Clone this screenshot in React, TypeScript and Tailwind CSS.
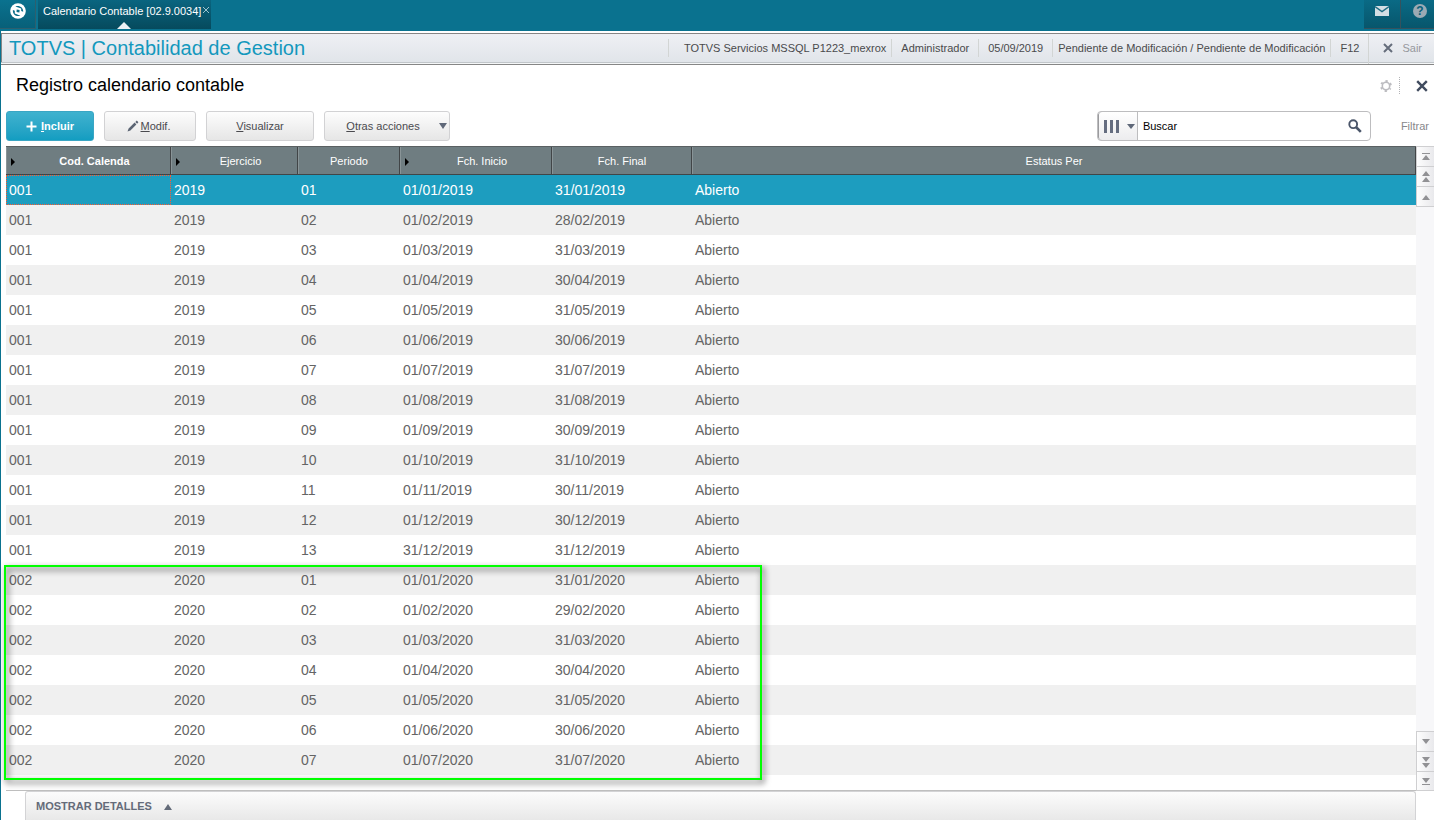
import type { ReactNode } from "react";

type Row = [string, string, string, string, string];

const rows: Row[] = [
  ["001", "2019", "01", "01/01/2019", "31/01/2019"],
  ["001", "2019", "02", "01/02/2019", "28/02/2019"],
  ["001", "2019", "03", "01/03/2019", "31/03/2019"],
  ["001", "2019", "04", "01/04/2019", "30/04/2019"],
  ["001", "2019", "05", "01/05/2019", "31/05/2019"],
  ["001", "2019", "06", "01/06/2019", "30/06/2019"],
  ["001", "2019", "07", "01/07/2019", "31/07/2019"],
  ["001", "2019", "08", "01/08/2019", "31/08/2019"],
  ["001", "2019", "09", "01/09/2019", "30/09/2019"],
  ["001", "2019", "10", "01/10/2019", "31/10/2019"],
  ["001", "2019", "11", "01/11/2019", "30/11/2019"],
  ["001", "2019", "12", "01/12/2019", "30/12/2019"],
  ["001", "2019", "13", "31/12/2019", "31/12/2019"],
  ["002", "2020", "01", "01/01/2020", "31/01/2020"],
  ["002", "2020", "02", "01/02/2020", "29/02/2020"],
  ["002", "2020", "03", "01/03/2020", "31/03/2020"],
  ["002", "2020", "04", "01/04/2020", "30/04/2020"],
  ["002", "2020", "05", "01/05/2020", "31/05/2020"],
  ["002", "2020", "06", "01/06/2020", "30/06/2020"],
  ["002", "2020", "07", "01/07/2020", "31/07/2020"],
];

const columns = [
  { label: "Cod. Calenda", width: "w-[165px]", sortable: true, bold: true },
  { label: "Ejercicio", width: "w-[127px]", sortable: true },
  { label: "Periodo", width: "w-[102px]" },
  { label: "Fch. Inicio", width: "w-[152px]", sortable: true },
  { label: "Fch. Final", width: "w-[140px]" },
  { label: "Estatus Per", width: "" },
];

function Cross({ className }: { className: string }) {
  return (
    <svg viewBox="0 0 12 12" className={className} aria-hidden="true">
      <path d="M1.2 1.2 10.8 10.8M10.8 1.2 1.2 10.8" stroke="currentColor" strokeWidth="2.4" fill="none" />
    </svg>
  );
}

function TopBar() {
  return (
    <div className="flex h-[31px] bg-[#0a728f]">
      <button aria-label="Inicio" className="flex h-[29px] w-9 items-start justify-center border-r border-b border-[#2d5f6e] bg-linear-to-b from-[#0a728f] to-[#086079] pt-[3px]">
        <svg viewBox="0 0 16 16" className="h-4 w-4" aria-hidden="true">
          <circle cx="8" cy="8" r="7.8" fill="#fff" />
          <path
            d="M5.4 3.4C9.4 2 13.4 4.4 13.2 8.8L11.2 7.9V5.6ZM2.9 6.9 4.8 7.8V10.4L10.4 12.7C6.4 14 2.4 11.4 2.9 6.9ZM6.7 6.5 9.6 7.1 9.4 9.5 6.5 8.9Z"
            fill="#0a6c88"
          />
        </svg>
      </button>
      <div className="relative ml-[2px] flex h-[29px] w-[173px] items-start gap-px bg-linear-to-b from-[#0a6580] to-[#064a5d] pt-1 pl-[5px] text-white">
        <span className="text-[11px] leading-[14px] whitespace-nowrap">Calendario Contable [02.9.0034]</span>
        <button aria-label="Cerrar pestaña" className="mt-[2px]">
          <svg viewBox="0 0 8 8" className="h-2 w-2" aria-hidden="true">
            <path d="M1 1 7 7M7 1 1 7" stroke="#9fc3ce" strokeWidth="1" />
          </svg>
        </button>
        <svg viewBox="0 0 14 7" className="absolute bottom-0 left-[79px] h-[7px] w-[14px]" aria-hidden="true">
          <path d="M7 0 14 7H0Z" fill="#eef1f4" />
        </svg>
      </div>
      <div className="ml-auto flex">
        <button aria-label="Mensajes" className="flex h-[29px] w-[37px] items-start justify-center border-r border-b border-[#35525d] bg-linear-to-b from-[#0a6a85] to-[#07566c] pt-[6px]">
          <svg viewBox="0 0 14 10" className="h-[10px] w-[14px]" aria-hidden="true">
            <rect width="14" height="10" fill="#d3dee4" />
            <path d="M0 .6 7 5.6 14 .6" fill="none" stroke="#1f6c83" strokeWidth="1.3" />
          </svg>
        </button>
        <button aria-label="Ayuda" className="flex h-[29px] w-[33px] items-start justify-center border-b border-[#35525d] bg-linear-to-b from-[#0a6a85] to-[#07566c] pt-1 pl-[5px]">
          <span className="flex h-[14px] w-[14px] items-center justify-center rounded-full bg-[#9baab4] text-[12px] leading-[14px] font-bold text-[#08607a]">?</span>
        </button>
      </div>
    </div>
  );
}

function InfoItem({ padding = "px-[9px]", children }: { padding?: string; children: ReactNode }) {
  return <li className={`${padding} flex h-[18px] items-center border-l border-[#d2d5d4] whitespace-nowrap`}>{children}</li>;
}

function AppHeader() {
  return (
    <header className="flex h-8 items-center border-y border-[#868686] bg-linear-to-b from-[#eff0f4] to-[#e0e4e9] shadow-[inset_0_-1px_0_#f5f7f8,inset_0_-2px_0_#c1c6ca,inset_1px_0_0_#868686]">
      <h1 className="pb-[2px] pl-2 text-[20px] leading-6 whitespace-nowrap text-[#1398bd]">TOTVS | Contabilidad de Gestion</h1>
      <ul className="ml-auto flex items-center pb-[2px] text-[11px] text-[#4a4a4c]">
        <InfoItem padding="pr-[5px] pl-[15px]">TOTVS Servicios MSSQL P1223_mexrox</InfoItem>
        <InfoItem>Administrador</InfoItem>
        <InfoItem>05/09/2019</InfoItem>
        <InfoItem padding="px-[5px]">Pendiente de Modificación / Pendiente de Modificación</InfoItem>
        <InfoItem>F12</InfoItem>
      </ul>
      <button className="flex h-full items-center gap-[9px] border-l border-[#d2d5d4] pr-3 pb-[2px] pl-[14px] text-[11px] text-[#96989d]">
        <Cross className="h-[10px] w-[10px] text-[#656d7b]" />
        Sair
      </button>
    </header>
  );
}

function TitleRow() {
  return (
    <div className="flex h-[46px] items-start pt-[9px]">
      <h2 className="pl-[15px] text-[18px] leading-[22px] text-black">Registro calendario contable</h2>
      <button aria-label="Configuración" className="mt-[6px] ml-auto">
        <svg viewBox="0 0 12 12" className="h-3 w-3" aria-hidden="true">
          <circle cx="6" cy="6" r="3.7" fill="none" stroke="#bcbcc0" strokeWidth="1.6" />
          <circle cx="6" cy="6" r="5" fill="none" stroke="#bcbcc0" strokeWidth="1.8" strokeDasharray="2.2 3.04" strokeDashoffset="1.1" transform="rotate(30 6 6)" />
        </svg>
      </button>
      <span className="mt-[3px] ml-[7px] h-[17px] border-l border-dotted border-[#b2b2b5]" />
      <button aria-label="Cerrar" className="mt-[6px] mr-[6px] ml-4">
        <Cross className="h-3 w-3 text-[#414c5f]" />
      </button>
    </div>
  );
}

const grayButton =
  "flex h-[30px] items-center justify-center rounded-[3px] border border-[#d2d2d4] bg-linear-to-b from-[#fdfdfd] to-[#e6e6e6] text-[11px] text-[#4a4a4f]";

function Toolbar() {
  return (
    <div className="flex items-center gap-[10px] pl-[5px] text-[11px]">
      <button className="flex h-[30px] w-[88px] items-center justify-center gap-1 rounded-[3px] border border-[#3aa6c4] bg-linear-to-b from-[#3fb2cf] to-[#129dc1] font-bold text-white">
        <svg viewBox="0 0 11 11" className="h-[11px] w-[11px]" aria-hidden="true">
          <path d="M5.5 0.5V10.5M.5 5.5H10.5" stroke="currentColor" strokeWidth="2" />
        </svg>
        <span><u>I</u>ncluir</span>
      </button>
      <button className={`${grayButton} w-[92px] gap-[2px] pr-[3px]`}>
        <svg viewBox="0 0 12 12" className="h-3 w-3" aria-hidden="true">
          <path d="M0.5 11.5 1.6 8.6 7.6 2.6 9.4 4.4 3.4 10.4Z M8.3 1.9 9.8.6 11.4 2.2 10.1 3.7Z" fill="#5b6473" />
        </svg>
        <span><u>M</u>odif.</span>
      </button>
      <button className={`${grayButton} w-[108px]`}><span><u>V</u>isualizar</span></button>
      <button className={`${grayButton} w-[126px] pr-[2px]`}>
        <span className="flex-1 pl-[2px]"><u>O</u>tras acciones</span>
        <svg viewBox="0 0 8 6" className="h-[6px] w-2" aria-hidden="true">
          <path d="M0 0H8L4 6Z" fill="#5f6879" />
        </svg>
      </button>
      <div className="ml-auto flex h-[30px] w-[274px] overflow-hidden rounded-[4px] border border-[#bdbdbf]">
        <button aria-label="Columnas de búsqueda" className="flex w-10 items-center gap-2 rounded-l-[3px] border-r border-[#bdbdbf] bg-linear-to-b from-white to-[#ececee] pl-[6px] shadow-[inset_1px_0_0_#9b9b9e]">
          <svg viewBox="0 0 15 13" className="h-[13px] w-[15px]" aria-hidden="true">
            <path d="M0 0H3V13H0ZM6 0H9V13H6ZM12 0H15V13H12Z" fill="#656d80" />
          </svg>
          <svg viewBox="0 0 8 5" className="h-[5px] w-2" aria-hidden="true">
            <path d="M0 0H8L4 5Z" fill="#5f6879" />
          </svg>
        </button>
        <input aria-label="Buscar" defaultValue="Buscar" className="min-w-0 flex-1 bg-white pl-[5px] text-[11px] text-black outline-none" />
        <button aria-label="Ejecutar búsqueda" className="pr-[8px]">
          <svg viewBox="0 0 14 14" className="h-[14px] w-[14px]" aria-hidden="true">
            <circle cx="5.2" cy="5.2" r="3.9" fill="none" stroke="#4b566a" strokeWidth="1.9" />
            <path d="M8 8 12.8 12.8" stroke="#4b566a" strokeWidth="2.6" />
          </svg>
        </button>
      </div>
      <button className="mr-[5px] ml-5 text-[11px] text-[#87878b]">Filtrar</button>
    </div>
  );
}

function CalendarTable() {
  return (
    <div className="relative min-w-0 flex-1 border-b border-[#bfbfbf] pb-[15px]">
      <table className="w-full table-fixed border-collapse text-left">
        <thead>
          <tr className="h-[29px] bg-[#6f7d81] text-[11px] text-white">
            {columns.map((c) => (
              <th
                key={c.label}
                scope="col"
                className={`${c.width} ${c.bold ? "font-bold" : "font-normal"} p-0 pt-[2px] shadow-[inset_0_1px_0_#5a6062,inset_-1px_-1px_0_#414547,inset_1px_0_0_#899497]`}
              >
                <div className="flex items-center">
                  {c.sortable && (
                    <span className="flex w-3 justify-end">
                      <svg viewBox="0 0 4 8" className="mr-[3px] h-2 w-1" aria-hidden="true">
                        <path d="M0 0 4 4 0 8Z" fill="#000" />
                      </svg>
                    </span>
                  )}
                  <span className="flex-1 text-center">{c.label}</span>
                </div>
              </th>
            ))}
          </tr>
        </thead>
        <tbody>
          {rows.map((row, i) => (
            <tr
              key={row[3] + row[0]}
              className={`h-[30px] text-[14px] ${i === 0 ? "bg-[#1d9dbf] text-white" : i % 2 ? "bg-[#f0f0f0] text-[#646464]" : "bg-white text-[#646464]"}`}
            >
              {[...row, "Abierto"].map((value, j) => (
                <td
                  key={j}
                  className={`p-0 pl-[3px] ${i === 0 && j === 0 ? "outline-1 -outline-offset-1 outline-dotted outline-[#ff5a30]" : ""}`}
                >
                  {value}
                </td>
              ))}
            </tr>
          ))}
        </tbody>
      </table>
      <div className="pointer-events-none absolute top-[419px] -left-[2px] h-[215px] w-[758px] border-2 border-[#00ff00] drop-shadow-[2px_3px_3px_rgba(0,0,0,0.75)]" />
    </div>
  );
}

function ScrollButton({ label, height, d }: { label: string; height: string; d: string }) {
  return (
    <button
      aria-label={label}
      className={`${height} flex w-[18px] items-center justify-center border-b border-l border-[#cfcfd1] bg-linear-to-r from-[#fdfdfd] to-[#e9e9ec]`}
    >
      <svg viewBox="0 0 8 12" className="h-3 w-2" aria-hidden="true">
        <path d={d} fill="#919194" />
      </svg>
    </button>
  );
}

function ScrollColumn() {
  return (
    <div className="flex w-[18px] flex-col bg-[#f7f7f9]">
      <div className="border-t border-[#cfcfd1]">
        <ScrollButton label="Primera fila" height="h-[20px]" d="M0 2H8V3H0ZM4 4 8 9H0Z" />
        <ScrollButton label="Página anterior" height="h-[20px]" d="M4 0 8 5H0ZM4 6 8 11H0Z" />
        <ScrollButton label="Fila anterior" height="h-[20px]" d="M4 4 8 9H0Z" />
      </div>
      <div className="flex-1" />
      <div className="border-t border-[#cfcfd1]">
        <ScrollButton label="Fila siguiente" height="h-[20px]" d="M0 3H8L4 8Z" />
        <ScrollButton label="Página siguiente" height="h-[20px]" d="M0 1H8L4 6ZM0 7H8L4 12Z" />
        <ScrollButton label="Última fila" height="h-[19px]" d="M0 3H8L4 8ZM0 9H8V10H0Z" />
      </div>
    </div>
  );
}

export default function App() {
  return (
    <div className="flex min-h-screen flex-col bg-white font-['Liberation_Sans',Arial,sans-serif]">
      <TopBar />
      <main className="flex flex-1 flex-col border-l border-[#0a728f] pt-[2px]">
        <AppHeader />
        <TitleRow />
        <Toolbar />
        <div className="mt-[5px] flex flex-1 pl-[5px]">
          <CalendarTable />
          <ScrollColumn />
        </div>
        <button className="mr-[18px] ml-6 flex h-[29px] items-center gap-3 rounded-t-[3px] border border-b-0 border-[#d3d3d5] bg-linear-to-b from-[#fcfcfc] to-[#e8e8e8] pt-px pl-[10px] text-[11px] font-bold text-[#646b79]">
          MOSTRAR DETALLES
          <svg viewBox="0 0 8 6" className="h-[6px] w-2" aria-hidden="true">
            <path d="M4 0 8 6H0Z" fill="#646b79" />
          </svg>
        </button>
      </main>
    </div>
  );
}
